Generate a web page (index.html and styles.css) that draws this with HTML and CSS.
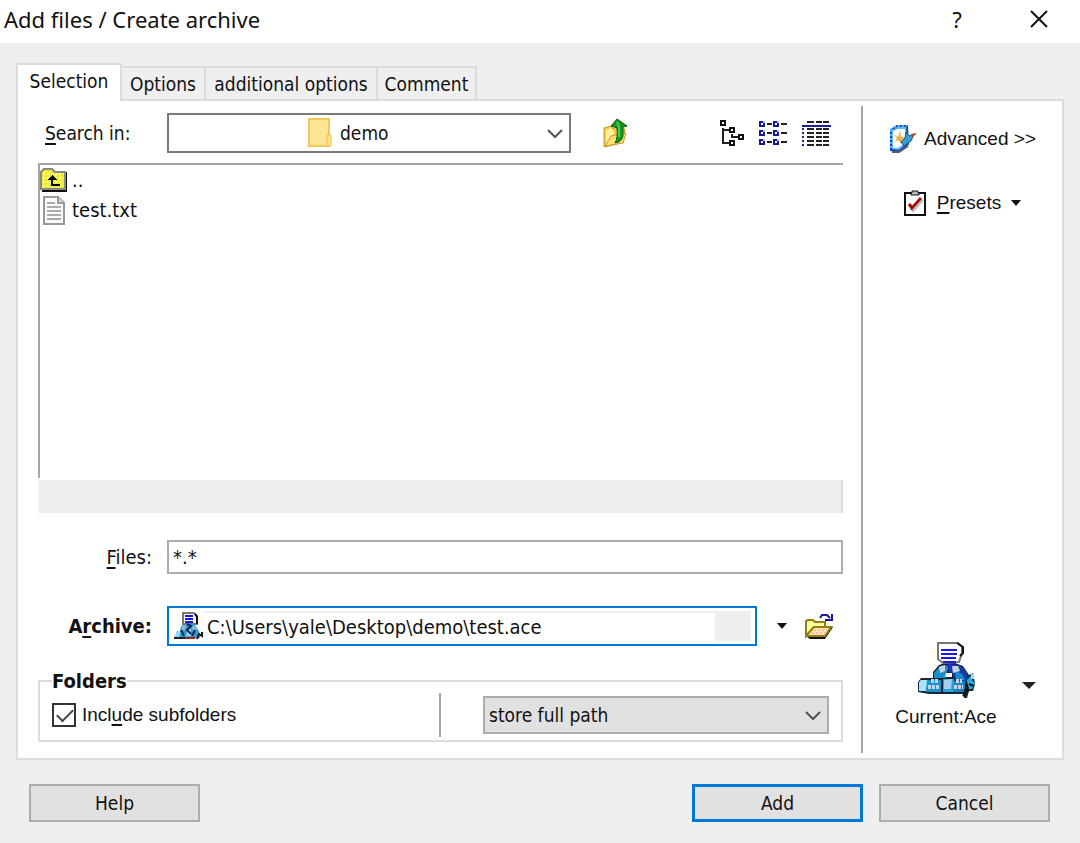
FILE: index.html
```html
<!DOCTYPE html>
<html lang="en">
<head>
    <meta charset="UTF-8">
    <meta name="viewport" content="width=device-width, initial-scale=1.0">
    <title>Add files / Create archive</title>
    <link rel="stylesheet" href="styles.css">
</head>
<body>
    <header class="titlebar">
        <h1>Add files / Create archive</h1>
        <button class="title-btn" type="button" aria-label="Help">?</button>
        <button class="title-btn" type="button" aria-label="Close">
            <svg width="18" height="18" viewBox="0 0 18 18"><path d="M1 1L17 17M17 1L1 17" stroke="#111" stroke-width="2" fill="none"/></svg>
        </button>
    </header>

    <form class="dialog">
        <div class="tabs">
            <button class="tab active" type="button">Selection</button>
            <button class="tab" type="button">Options</button>
            <button class="tab wide" type="button">additional options</button>
            <button class="tab" type="button">Comment</button>
        </div>

        <div class="panel">
            <div class="main">
                <div class="search-row">
                    <label for="folder"><u>S</u>earch in:</label>
                    <div class="select-box folder-box">
                        <select id="folder">
                            <option>demo</option>
                        </select>
                        <svg class="folder-icon" width="24" height="29" viewBox="0 0 24 29"><path d="M1 1H21V28H1Z" fill="#ffe594" stroke="#eec958" stroke-width="2"/><path d="M19 17H23V28H19Z" fill="#ffe082" stroke="#e9c44f"/></svg>
                        <svg class="chevron" width="16" height="10" viewBox="0 0 16 10"><path d="M1 1L8 8L15 1" stroke="#555" stroke-width="2" fill="none"/></svg>
                    </div>
                    <button class="icon-btn up-btn" type="button" aria-label="Up one level">
                        <svg width="25" height="30" viewBox="0 0 25 30">
                            <path d="M1 10L8 8L11 11L22 11L20 24L10 27L1 29Z" fill="#f5cc45" stroke="#c8962c"/>
                            <path d="M3 12L8 10L11 14L10 22L3 25Z" fill="#fff0a0"/>
                            <path d="M2 28L8 18L23 15L20 25Z" fill="#ffe371" stroke="#c8962c"/>
                            <path d="M14 1L24 8L20 9V18Q19 24 12 25Q15 20 14 10L8 8Z" fill="#16961d" stroke="#096312"/>
                            <path d="M14 4L16 9V19" stroke="#58c653" stroke-width="2" fill="none"/>
                        </svg>
                    </button>
                    <div class="views">
                        <button class="icon-btn" type="button" aria-label="Tree view">
                            <svg width="25" height="27" viewBox="0 0 25 27" shape-rendering="crispEdges">
                                <path d="M3 8V23H9M3 10H9M12 14V17H18" stroke="#222" stroke-width="2" fill="none"/>
                                <path d="M1 1H5V5H1ZM10 8H14V12H10ZM19 15H23V19H19ZM10 21H14V25H10Z" stroke="#111" stroke-width="2" fill="#fff"/>
                            </svg>
                        </button>
                        <button class="icon-btn" type="button" aria-label="List view">
                            <svg width="29" height="27" viewBox="0 0 29 27" shape-rendering="crispEdges">
                                <path d="M1 2H5V6H1ZM15 2H19V6H15ZM1 11H5V15H1ZM15 11H19V15H15ZM1 20H5V24H1ZM15 20H19V24H15Z" fill="#fff" stroke="#171799" stroke-width="2"/>
                                <path d="M4 1H6V3H4ZM18 1H20V3H18ZM4 10H6V12H4ZM18 10H20V12H18ZM4 19H6V21H4ZM18 19H20V21H18Z" fill="#b8b8e0"/>
                                <path d="M8 4H13M22 4H28M8 13H13M22 13H28M8 22H13M22 22H28" stroke="#222" stroke-width="2"/>
                            </svg>
                        </button>
                        <button class="icon-btn" type="button" aria-label="Details view">
                            <svg width="29" height="27" viewBox="0 0 29 27" shape-rendering="crispEdges">
                                <path d="M5 2H12M14 2H20M21 2H27M5 9H12M14 9H20M21 9H27M5 13H12M14 13H20M21 13H27M5 17H12M14 17H20M21 17H27M5 21H12M14 21H20M21 21H27M5 25H12M14 25H20M21 25H27" stroke="#222" stroke-width="2"/>
                                <path d="M0 6H29M0 9H2M0 13H2M0 17H2M0 21H2M0 25H2" stroke="#1c1ca0" stroke-width="2"/>
                            </svg>
                        </button>
                    </div>
                </div>

                <ul class="file-list">
                    <li>
                        <svg width="27" height="24" viewBox="0 0 27 24" shape-rendering="crispEdges">
                            <path d="M3 4H27V24H2Z" fill="#111"/>
                            <path d="M1 4L4 1H12L15 4H25V21H1Z" fill="#f1ee2e" stroke="#888" stroke-width="2"/>
                            <path d="M3 6H23M3 10H23M3 14H23M3 18H23" stroke="#fffbb0" stroke-width="2" stroke-dasharray="2 2"/>
                            <path d="M7 12L12 7L17 12Z" fill="#000"/><path d="M12 9V17H20" stroke="#000" stroke-width="2" fill="none"/>
                        </svg>
                        <span>..</span>
                    </li>
                    <li>
                        <svg width="27" height="29" viewBox="0 0 27 29"><path d="M4 1H18L24 7V28H4Z" fill="#fafafa" stroke="#999" stroke-width="2"/><path d="M18 1V7H24" fill="#ddd" stroke="#999" stroke-width="2"/><path d="M7 7H15M7 11H21M7 15H21M7 19H21M7 23H21" stroke="#aaa" stroke-width="2"/></svg>
                        <span>test.txt</span>
                    </li>
                </ul>
                <div class="status"></div>

                <div class="field-row files-row">
                    <label for="files"><u>F</u>iles:</label>
                    <input id="files" class="files-input" type="text" value="*.*">
                </div>

                <div class="field-row archive-row">
                    <label for="archive"><b>A<u>r</u>chive:</b></label>
                    <div class="archive-box">
                        <svg width="30" height="28" viewBox="0 0 30 28">
                            <path d="M10 1H21L24 4V12H10Z" fill="#fff" stroke="#777" stroke-width="2"/>
                            <path d="M22 2L24 5V12" stroke="#111" stroke-width="2" fill="none"/>
                            <path d="M12 4H20M12 7H20M12 10H20" stroke="#1717f0" stroke-width="2"/>
                            <path d="M8 14L13 12H21L26 19L27 26H2L4 19H7Z" fill="#2aa0cc"/>
                            <path d="M9 14L13 13L12 18H8ZM20 13L24 17L22 19L19 17Z" fill="#9fb8c8"/>
                            <path d="M1 25L5 19H8L6 25ZM13 24L15 17H18V24Z" fill="#8fdcf5"/>
                            <path d="M14 12L18 14L14 18L18 22M8 18L11 24M22 18L19 24" stroke="#14225c" stroke-width="2" fill="none"/>
                            <path d="M1 26H12" stroke="#222" stroke-width="2"/>
                            <path d="M12 26H22" stroke="#a32222" stroke-width="2"/>
                            <path d="M24 27L26 22L29 24V20" stroke="#111" stroke-width="2" fill="none"/>
                        </svg>
                        <input id="archive" type="text" value="C:\Users\yale\Desktop\demo\test.ace">
                        <span class="archive-end"></span>
                    </div>
                    <button class="icon-btn" type="button" aria-label="Recent archives">
                        <svg width="10" height="6" viewBox="0 0 10 6"><path d="M0 0H10L5 6Z" fill="#111"/></svg>
                    </button>
                    <button class="icon-btn open-btn" type="button" aria-label="Browse">
                        <svg width="28" height="26" viewBox="0 0 28 26">
                            <path d="M2 24L5 26H20L28 14L26 13Z" fill="#111"/>
                            <path d="M1 8L3 7H8L10 9H20V14H9L1 23Z" fill="#ffff9c" stroke="#918010" stroke-width="2"/>
                            <path d="M1 23L9 14H26L20 23Z" fill="#ffe6a8" stroke="#918010" stroke-width="2"/>
                            <path d="M9 17H22M7 20H20" stroke="#f7bcb0" stroke-width="2" stroke-dasharray="2 2"/>
                            <path d="M15 5L17 2H22L25 5M20 7H27V1" fill="none" stroke="#17179a" stroke-width="2"/>
                        </svg>
                    </button>
                </div>

                <fieldset class="folders">
                    <legend>Folders</legend>
                    <label class="check"><input type="checkbox" checked><span>Incl<u>u</u>de subfolders</span></label>
                    <div class="select-box path-box">
                        <select aria-label="Path storage">
                            <option>store full path</option>
                        </select>
                        <svg class="chevron" width="16" height="10" viewBox="0 0 16 10"><path d="M1 1L8 8L15 1" stroke="#555" stroke-width="2" fill="none"/></svg>
                    </div>
                </fieldset>
            </div>

            <div class="side">
                <button class="side-btn" type="button">
                    <svg width="28" height="29" viewBox="0 0 28 29">
                        <path d="M2 6L8 2L18 2L19 20L10 27L2 26Z" fill="#6bb4f5" stroke="#1546bd" stroke-width="2"/>
                        <path d="M2 6L8 2L18 2M2 6V26" fill="none" stroke="#4fb4ff" stroke-width="2" stroke-dasharray="2 2"/>
                        <path d="M4 7L9 5H16V19L9 24H4Z" fill="#f7faff"/>
                        <path d="M5 10L9 13L11 7L12 13L16 13L13 16L12 20L9 16L6 18L8 14Z" fill="#e5b34a"/>
                        <path d="M12 18L16 14L17 8L20 12L25 10L22 17L15 22Z" fill="#3c9ed0" stroke="#1a587f"/>
                        <path d="M22 10L28 9L23 14Z" fill="#ad4933"/>
                        <path d="M3 28H10L19 22" stroke="#55606e" stroke-width="2" fill="none"/>
                    </svg>
                    Advanced &gt;&gt;
                </button>
                <button class="side-btn" type="button">
                    <svg class="preset-icon" width="22" height="26" viewBox="0 0 22 26"><path d="M1 3H21V25H1Z" fill="#fff" stroke="#111" stroke-width="2"/><path d="M7 3H8V1H14V3H15V5H7Z" fill="#bbb" stroke="#111"/><path d="M6 18L9 21L19 10" stroke="#bbb" stroke-width="2" fill="none"/><path d="M5 14L8 18L17 8" stroke="#9c1010" stroke-width="3" fill="none"/></svg>
                    <span><u>P</u>resets</span>
                    <svg class="drop" width="10" height="6" viewBox="0 0 10 6"><path d="M0 0H10L5 6Z" fill="#111"/></svg>
                </button>
                <div class="current">
                    <button class="current-btn" type="button">
                        <svg width="59" height="56" viewBox="0 0 59 56">
                            <path d="M22 23L16 30V36H4L1 40V50L12 52H46L47 56H50L52 49H56L58 42L56 31L52 33L46 24L38 21H28Z" fill="#172632"/>
                            <path d="M23 24L32 23L28 36H17V31Z" fill="#1c8fcb"/>
                            <path d="M37 23H44L50 31L51 39H39L33 27Z" fill="#123fa0"/>
                            <path d="M38 28L45 32L48 38H39Z" fill="#1b87cf"/>
                            <path d="M22 25L28 23V29L23 31ZM35 24L41 24L43 29L36 31Z" fill="#c5d5df"/>
                            <path d="M29 31H35V35H28Z" fill="#fff"/>
                            <path d="M2 40L4 38H11L9 49H2Z" fill="#a6e5fb"/>
                            <path d="M10 38H24V50H9Z" fill="#1c91cf"/>
                            <path d="M11 45H23M14 39H22" stroke="#b7d9ee" stroke-width="4" stroke-dasharray="3 1"/>
                            <path d="M26 37H37V50H26Z" fill="#2aa3da"/>
                            <path d="M27 38L35 37L34 47H27Z" fill="#a3cff0"/>
                            <path d="M37 39H48V50H36Z" fill="#1685c7"/>
                            <path d="M37 45H46M39 39H45" stroke="#c4d5e1" stroke-width="4" stroke-dasharray="3 1"/>
                            <path d="M50 38L55 32L55 38L58 42L55 47H51Z" fill="#2baade"/>
                            <path d="M54 32H57V37H54Z" fill="#9bdcf5"/>
                            <path d="M46 54L51 46L49 41M47 48L52 49M52 42L57 44" stroke="#111" stroke-width="2" fill="none"/>
                            <path d="M21 1H41L45 5V11L42 20L26 21L21 17Z" fill="#fff" stroke="#777" stroke-width="2"/>
                            <path d="M40 1L46 5V11L43 14" stroke="#111" stroke-width="2" fill="none"/>
                            <path d="M24 8H40M24 12H40M24 16H39M26 20H39" stroke="#1717f0" stroke-width="2"/>
                            <path d="M30 24L35 23L32 27L34 30" stroke="#2828e6" stroke-width="2" fill="none"/>
                        </svg>
                        <span>Current:Ace</span>
                    </button>
                    <button class="icon-btn" type="button" aria-label="Choose archive type">
                        <svg width="14" height="7" viewBox="0 0 14 7"><path d="M0 0H14L7 7Z" fill="#222"/></svg>
                    </button>
                </div>
            </div>
        </div>

        <div class="footer">
            <button class="btn help" type="button">Help</button>
            <button class="btn primary" type="button">Add</button>
            <button class="btn" type="button">Cancel</button>
        </div>
    </form>
</body>
</html>
```

FILE: styles.css
```css
* {
    box-sizing: border-box;
}

body {
    margin: 0;
    min-height: 100vh;
    display: flex;
    flex-direction: column;
    background: #efefef;
    color: #111;
    font-family: "DejaVu Sans Condensed", "Noto Sans", sans-serif;
    font-size: 19px;
    line-height: 24px;
}

button, input, select {
    font: inherit;
    color: inherit;
    margin: 0;
}

button {
    padding: 0;
    border: none;
    background: none;
    white-space: nowrap;
}

svg {
    display: block;
    flex: none;
}

u {
    text-underline-offset: 3px;
    text-decoration-thickness: 2px;
    text-decoration-skip-ink: none;
}

/* title bar */
.titlebar {
    display: flex;
    align-items: center;
    height: 43px;
    padding: 0 4px 6px;
    background: #fff;
    font-family: "Noto Sans", sans-serif;
}

.titlebar h1 {
    flex: 1;
    margin: 0;
    font-size: 22px;
    font-weight: normal;
}

.title-btn {
    display: flex;
    align-items: center;
    justify-content: center;
    width: 82px;
    height: 37px;
    font-size: 22px;
}

.title-btn:last-child {
    margin-right: -4px;
}

.dialog {
    flex: 1;
    display: flex;
    flex-direction: column;
    padding: 20px 16px 21px;
}

/* tabs */
.tabs {
    display: flex;
    align-items: flex-end;
}

.tab {
    min-width: 84px;
    height: 33px;
    padding: 0 6px;
    border: 2px solid #dcdcdc;
    border-width: 2px 2px 0 0;
}

.tab.wide {
    min-width: 172px;
}

.tab:last-child {
    min-width: 99px;
}

.tab.active {
    min-width: 106px;
    height: 38px;
    margin-bottom: -2px;
    padding-bottom: 4px;
    border-width: 2px 2px 0 2px;
    background: #fff;
    z-index: 1;
}

.panel {
    flex: 1;
    display: flex;
    border: 2px solid #dcdcdc;
    background: #fff;
}

.main {
    flex: 1;
    min-width: 0;
    display: flex;
    flex-direction: column;
    margin: 5px 0;
    padding: 7px 18px 11px 20px;
    border-right: 2px solid #a5a5a5;
}

/* search row */
.search-row {
    display: flex;
    align-items: center;
}

.search-row label {
    width: 129px;
    padding-left: 7px;
}

.select-box {
    position: relative;
}

.select-box select {
    appearance: none;
    width: 100%;
    height: 40px;
    border: 2px solid #7a7a7a;
    border-radius: 0;
    background: #fff;
}

.folder-box {
    flex: 1;
    max-width: 404px;
}

.folder-box select {
    padding-left: 171px;
}

.folder-icon {
    position: absolute;
    left: 141px;
    top: 5px;
}

.chevron {
    position: absolute;
    right: 8px;
    top: 50%;
    margin-top: -4px;
    pointer-events: none;
}

.up-btn {
    margin-left: 32px;
}

.views {
    display: flex;
    gap: 14px;
    margin-left: auto;
    padding-right: 12px;
}

/* file list */
.file-list {
    flex: 1;
    margin: 10px 0 0;
    padding: 0;
    list-style: none;
    border: 2px solid #a5a5a5;
    border-width: 2px 0 0 2px;
    font-size: 20px;
}

.file-list li {
    display: flex;
    align-items: center;
    gap: 5px;
    height: 30px;
}

.status {
    height: 33px;
    margin-top: 2px;
    background: #efefef;
    border-right: 2px solid #dcdcdc;
}

/* text fields */
.field-row {
    display: flex;
    align-items: center;
    font-size: 20px;
}

.field-row > label {
    width: 129px;
    padding-right: 15px;
    text-align: right;
}

.files-row {
    margin-top: 27px;
}

.files-input {
    flex: 1;
    height: 34px;
    padding: 0 4px;
    border: 2px solid #abadb3;
}

.archive-row {
    margin-top: 32px;
}

.archive-box {
    flex: 1;
    display: flex;
    align-items: center;
    height: 40px;
    margin-right: 20px;
    padding: 4px;
    border: 2px solid #0078d7;
    background: #fff;
}

.archive-box input {
    flex: 1;
    min-width: 0;
    height: 30px;
    padding: 0 4px;
    border: none;
    border-top: 2px solid #efefef;
    outline: none;
    background: #fff;
}

.archive-end {
    width: 36px;
    height: 30px;
    background: #efefef;
}

.open-btn {
    margin: 0 10px 0 18px;
}

/* folders group */
.folders {
    display: flex;
    align-items: center;
    min-width: 0;
    height: 73px;
    margin: 23px 0 0;
    padding: 0 12px 12px;
    border: 2px solid #dcdcdc;
}

.folders legend {
    padding: 0;
    font-size: 20px;
    font-weight: bold;
}

.check {
    flex: 1;
    display: flex;
    align-items: center;
    gap: 6px;
    height: 44px;
    margin-right: 42px;
    border-right: 2px solid #a5a5a5;
}

.check input {
    appearance: none;
    width: 24px;
    height: 24px;
    border: 2px solid #333;
    background: #fff;
}

.check input:checked::before {
    content: "";
    display: block;
    width: 14px;
    height: 7px;
    margin: 4px 3px;
    border: 2px solid #444;
    border-width: 0 0 2px 2px;
    transform: rotate(-45deg);
}

.check span, .side {
    font-family: "Liberation Sans", sans-serif;
    font-size: 19px;
}

.path-box {
    width: 346px;
}

.path-box select {
    height: 38px;
    padding-left: 4px;
    border-color: #adadad;
    background: #e1e1e1;
}

/* right column */
.side {
    width: 199px;
    display: flex;
    flex-direction: column;
    align-items: center;
    padding: 23px 0 29px;
}

.side-btn {
    display: flex;
    align-items: center;
    gap: 7px;
    height: 29px;
    margin-bottom: 35px;
}

.preset-icon {
    margin-right: 4px;
}

.drop {
    margin-left: 3px;
}

.current {
    display: flex;
    align-items: center;
    gap: 25px;
    margin-top: auto;
    padding-left: 6px;
}

.current-btn {
    display: flex;
    flex-direction: column;
    align-items: center;
    gap: 7px;
}

/* bottom buttons */
.footer {
    display: flex;
    gap: 16px;
    padding: 24px 14px 0 13px;
}

.btn {
    width: 171px;
    height: 38px;
    border: 2px solid #adadad;
    background: #e1e1e1;
}

.btn.primary {
    border: 3px solid #0078d7;
}

.help {
    margin-right: auto;
}
```
